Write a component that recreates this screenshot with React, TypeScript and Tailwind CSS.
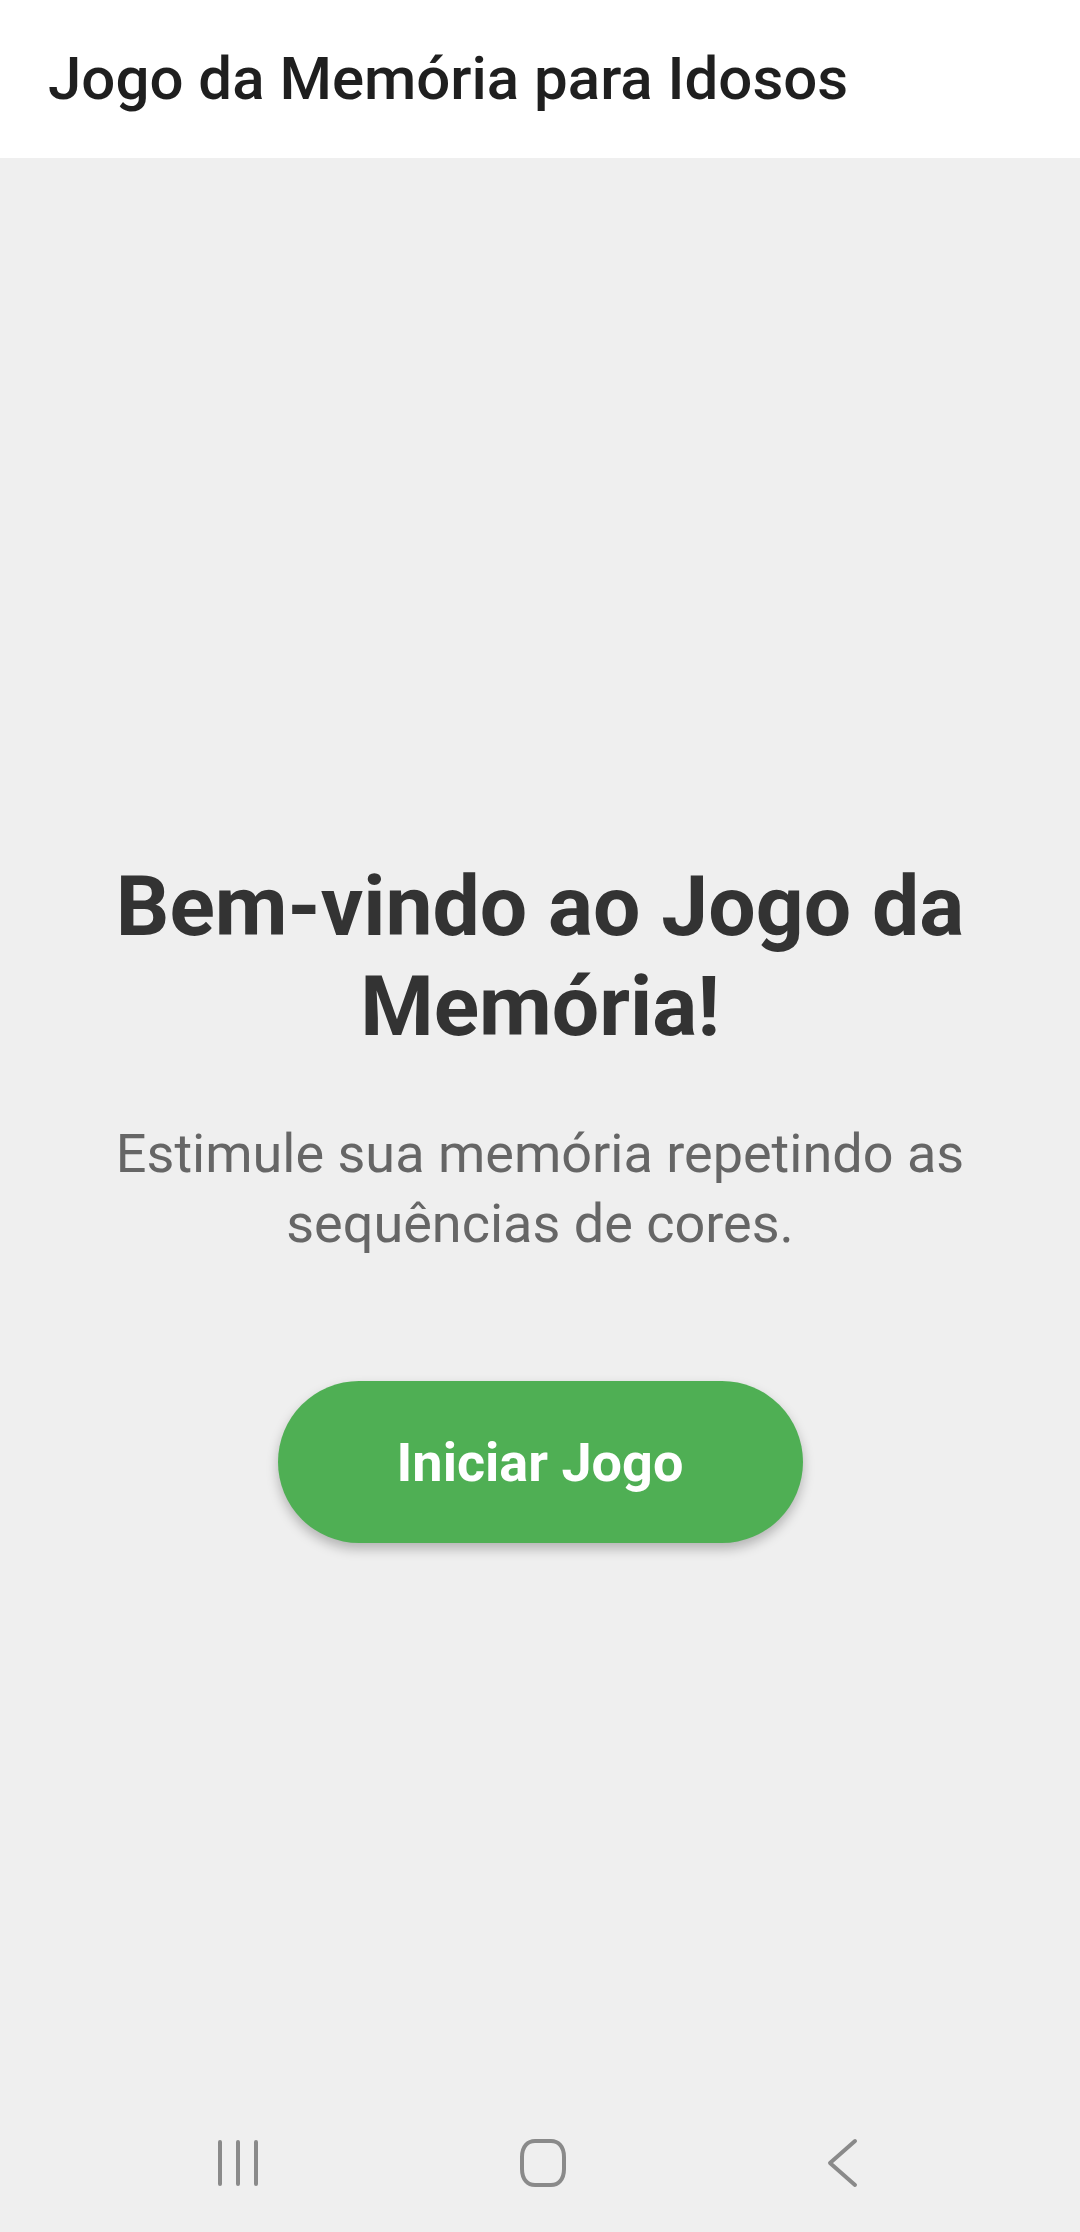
import React from "react";

const NavBar: React.FC = () => (
  <div className="h-[132px] bg-[#efefef] flex items-center justify-between pl-[217px] pr-[221px] pb-[6px]">
    <svg width="42" height="48" viewBox="0 0 42 48" fill="none" stroke="#8a8a8a" strokeWidth="4" strokeLinecap="round">
      <path d="M3 3v42M21 3v42M39 3v42" />
    </svg>
    <svg width="48" height="50" viewBox="0 0 48 50" fill="none" stroke="#8a8a8a" strokeWidth="4">
      <path d="M16 3h16c7 0 13 5 13 16v12c0 11-6 16-13 16H16C9 47 3 42 3 31V19C3 8 9 3 16 3z" />
    </svg>
    <svg width="33" height="50" viewBox="0 0 33 50" fill="none" stroke="#8a8a8a" strokeWidth="4" strokeLinecap="round" strokeLinejoin="round">
      <path d="M29 3L4 25l25 22" />
    </svg>
  </div>
);

export default function App() {
  return (
    <div className="w-[1080px] h-[2232px] flex flex-col bg-[#efefef] font-['Roboto',sans-serif]">
      <header className="h-[158px] bg-white flex items-center px-[48px] shrink-0">
        <h1 className="text-[60px] font-medium text-[#1f1f1f] leading-none">Jogo da Memória para Idosos</h1>
      </header>

      <main className="flex-1 flex flex-col items-center px-12 pt-[699px] text-center">
        <h2 className="text-[84px] font-bold leading-[100px] text-[#333333]">Bem-vindo ao Jogo da Memória!</h2>
        <p className="mt-[62px] text-[54px] leading-[70px] text-[#666666]">
          Estimule sua memória repetindo as sequências de cores.
        </p>
        <button className="mt-[122px] w-[525px] h-[162px] rounded-full bg-[#4faf54] text-white text-[54px] font-bold shadow-[0_6px_12px_rgba(0,0,0,0.25)]">
          Iniciar Jogo
        </button>
      </main>

      <NavBar />
    </div>
  );
}
